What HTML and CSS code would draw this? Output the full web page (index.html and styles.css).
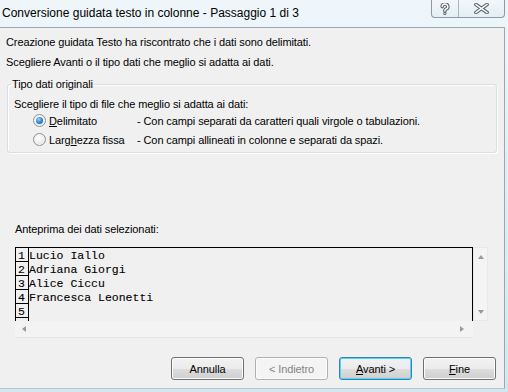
FILE: index.html
```html
<!DOCTYPE html>
<html lang="it">
<head>
    <meta charset="UTF-8">
    <title>Conversione guidata testo in colonne</title>
    <link rel="stylesheet" href="styles.css">
</head>
<body>
    <div class="window">
        <div class="titlebar">
            <span class="title">Conversione guidata testo in colonne - Passaggio 1 di 3</span>
            <div class="caption-buttons">
                <span class="cap-btn help">
                    <svg width="10" height="12" viewBox="0 0 10 12">
                        <path d="M2.2 3.6 a2.8 2.6 0 1 1 3.6 2.5 q-0.9 0.4 -0.9 1.4 v0.6" fill="none" stroke="#5d6873" stroke-width="3.6" stroke-linecap="round"/>
                        <circle cx="4.9" cy="10.4" r="1.6" fill="#5d6873"/>
                        <path d="M2.2 3.6 a2.8 2.6 0 1 1 3.6 2.5 q-0.9 0.4 -0.9 1.4 v0.6" fill="none" stroke="#fff" stroke-width="1.4" stroke-linecap="round"/>
                        <circle cx="4.9" cy="10.4" r="0.6" fill="#fff"/>
                    </svg>
                </span>
                <span class="cap-btn close">
                    <svg width="15" height="11" viewBox="0 0 15 11">
                        <path d="M2 1.5 L13 9.5 M13 1.5 L2 9.5" stroke="#5d6873" stroke-width="3.6" stroke-linecap="square"/>
                        <path d="M2 1.5 L13 9.5 M13 1.5 L2 9.5" stroke="#fff" stroke-width="1.4" stroke-linecap="square"/>
                    </svg>
                </span>
            </div>
        </div>

        <div class="client">
            <p class="intro">Creazione guidata Testo ha riscontrato che i dati sono delimitati.</p>
            <p class="intro">Scegliere Avanti o il tipo dati che meglio si adatta ai dati.</p>

            <fieldset class="group">
                <legend>Tipo dati originali</legend>
                <p class="group-hint">Scegliere il tipo di file che meglio si adatta ai dati:</p>
                <label class="option">
                    <span class="radio checked"></span>
                    <span class="opt-name"><u>D</u>elimitato</span>
                    <span class="opt-desc">- Con campi separati da caratteri quali virgole o tabulazioni.</span>
                </label>
                <label class="option">
                    <span class="radio"></span>
                    <span class="opt-name">Larg<u>h</u>ezza fissa</span>
                    <span class="opt-desc">- Con campi allineati in colonne e separati da spazi.</span>
                </label>
            </fieldset>

            <p class="preview-label">Anteprima dei dati selezionati:</p>

            <div class="preview">
                <div class="preview-main">
                    <div class="grid">
                        <div class="row"><span class="num">1</span><span class="cell">Lucio Iallo</span></div>
                        <div class="row"><span class="num">2</span><span class="cell">Adriana Giorgi</span></div>
                        <div class="row"><span class="num">3</span><span class="cell">Alice Ciccu</span></div>
                        <div class="row"><span class="num">4</span><span class="cell">Francesca Leonetti</span></div>
                        <div class="row"><span class="num">5</span><span class="cell"></span></div>
                        <div class="row"><span class="num"></span><span class="cell"></span></div>
                    </div>
                    <div class="vscroll">
                        <span class="arrow up"></span>
                        <span class="arrow down"></span>
                    </div>
                </div>
                <div class="hscroll">
                    <span class="arrow left"></span>
                    <span class="arrow right"></span>
                </div>
            </div>

            <div class="buttons">
                <button class="btn">Annulla</button>
                <button class="btn" disabled>&lt; Indietro</button>
                <button class="btn default"><u>A</u>vanti &gt;</button>
                <button class="btn"><u>F</u>ine</button>
            </div>
        </div>
    </div>
</body>
</html>
```

FILE: styles.css
```css
/* Grund-Layout */
html, body {
    margin: 0;
    padding: 0;
}

body {
    width: 508px;
    height: 392px;
    overflow: hidden;
    font-family: "Liberation Sans", Arial, sans-serif;
    font-size: 11px;
    letter-spacing: -0.1px;
    color: #000;
}

.window {
    height: 392px;
    background: linear-gradient(to bottom, #eef6fa 0%, #dcecf4 60%, #d2e8f0 100%);
}

/* Titelleiste */
.titlebar {
    height: 27px;
    display: flex;
    justify-content: space-between;
    align-items: flex-start;
}

.title {
    padding-left: 2px;
    font-size: 12px;
    letter-spacing: 0;
    line-height: 27px;
    color: #000;
}

.caption-buttons {
    display: flex;
    margin-right: 3px;
    height: 17px;
    border: 1px solid #8c9aa7;
    border-top: none;
    border-radius: 0 0 4px 4px;
    background: linear-gradient(to bottom, #f2f7fa, #e4eef4);
}

.cap-btn {
    display: flex;
    align-items: center;
    justify-content: center;
}

.cap-btn.help {
    width: 26px;
    border-right: 1px solid #a9b5c0;
}

.cap-btn.close {
    width: 45px;
}

/* Inhalt */
.client {
    margin-right: 3px;
    padding-top: 4px;
    background: #f0f0f0;
    border-top: 1px solid #9aa8b4;
    border-right: 1px solid #9aa8b4;
    border-bottom: 1px solid #b5c4cf;
}

.intro {
    margin: 0;
    padding-left: 6px;
    line-height: 20px;
}

.group {
    margin: 6px 7px 0 7px;
    padding: 6px 6px 3px 6px;
    border: 1px solid #d5dfe5;
    border-radius: 3px;
    box-shadow: inset 1px 1px 0 #fff, 1px 1px 0 #fff;
}

.group legend {
    margin-left: -3px;
    padding: 0 1px;
    line-height: 13px;
}

.group-hint {
    margin: 0;
    line-height: 14px;
}

.option {
    display: flex;
    align-items: center;
    height: 19px;
    padding-left: 19px;
}

.radio {
    width: 11px;
    height: 11px;
    margin-right: 3px;
    border: 1px solid #8e8f8f;
    border-radius: 50%;
    background: radial-gradient(circle at 40% 35%, #ffffff 0%, #f0f0f0 45%, #d4d4d4 100%);
    box-shadow: inset 0 0 0 1px #f4f4f4;
    position: relative;
}

.radio.checked::after {
    content: "";
    position: absolute;
    left: 2px;
    top: 2px;
    width: 7px;
    height: 7px;
    border-radius: 50%;
    background: radial-gradient(circle at 40% 35%, #9fd5ff 0%, #3c8fd4 45%, #15507f 100%);
}

.opt-name {
    width: 88px;
}

/* Vorschau */
.preview-label {
    margin: 69px 0 0 15px;
    line-height: 14px;
}

.preview {
    margin: 11px 0 0 15px;
    width: 475px;
}

.preview-main {
    display: flex;
}

.grid {
    width: 456px;
    height: 73px;
    overflow: hidden;
    border: 1px solid #000;
    border-bottom: none;
    font-family: "Liberation Mono", "Courier New", monospace;
    font-size: 11.5px;
    letter-spacing: 0;
    -webkit-text-stroke: 0.1px #000;
}

.row {
    display: flex;
    height: 14px;
}

.num,
.cell {
    height: 14px;
    box-sizing: border-box;
    line-height: 16px;
}

.num {
    width: 13px;
    padding-left: 2px;
    border-right: 1px solid #000;
    border-bottom: 1px solid #000;
}

.cell {
    flex: 1;
}

.vscroll {
    width: 15px;
    height: 74px;
    box-sizing: border-box;
    border: 1px solid #e9e9e9;
    background: #f4f4f4;
    display: flex;
    flex-direction: column;
    justify-content: space-between;
    align-items: center;
    padding: 7px 0 6px 0;
}

.hscroll {
    width: 458px;
    height: 17px;
    box-sizing: border-box;
    border-bottom: 1px solid #e4e4e4;
    background: #f3f3f3;
    display: flex;
    justify-content: space-between;
    align-items: center;
    padding: 0 9px 0 7px;
}

.arrow {
    width: 0;
    height: 0;
    border: 3px solid transparent;
}

.arrow.up { border-bottom: 4px solid #9a9a9a; border-top: none; }
.arrow.down { border-top: 4px solid #9a9a9a; border-bottom: none; }
.arrow.left { border-right: 4px solid #9a9a9a; border-left: none; }
.arrow.right { border-left: 4px solid #9a9a9a; border-right: none; }

/* Schaltflächen */
.buttons {
    display: flex;
    justify-content: flex-end;
    gap: 11px;
    padding: 19px 8px 8px 0;
}

.btn {
    width: 73px;
    height: 23px;
    padding: 0;
    font-family: "Liberation Sans", Arial, sans-serif;
    font-size: 11px;
    letter-spacing: -0.1px;
    color: #000;
    border: 1px solid #707070;
    border-radius: 3px;
    background: linear-gradient(to bottom, #f2f2f2 0%, #ebebeb 50%, #dddddd 51%, #cfcfcf 100%);
    box-shadow: inset 0 0 0 1px #fcfcfc;
}

.btn:disabled {
    color: #838383;
    border-color: #adb2b5;
    background: #f4f4f4;
}

.btn.default {
    border-color: #3c7fb1;
    box-shadow: inset 0 0 0 1px #48d8fb;
}
```
